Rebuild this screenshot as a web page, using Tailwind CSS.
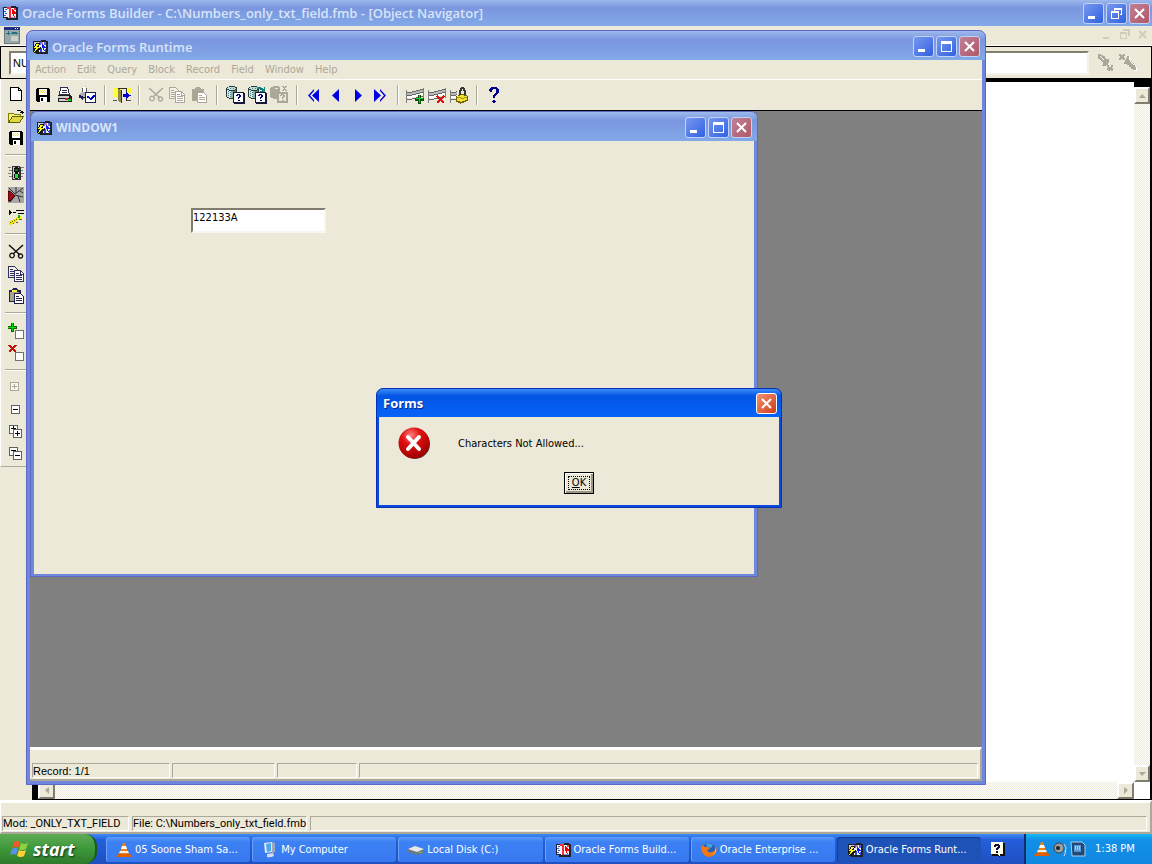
<!DOCTYPE html>
<html lang="en">
<head>
  <meta charset="utf-8">
  <title>Oracle Forms Builder</title>
  <script src="https://cdn.jsdelivr.net/npm/@tailwindcss/browser@4"></script>
</head>
<body class="h-screen overflow-hidden relative flex flex-col bg-[#ece9d8] text-black text-[11px] leading-[14px] font-['DejaVu_Sans_Condensed','DejaVu_Sans',sans-serif]">

  <!-- shared icons -->
  <svg class="hidden">
    <symbol id="builder" viewBox="0 0 16 16">
      <path d="M1 2h8V1h5v1h2v13H4v-2H1z" fill="#202028"/>
      <path d="M2 3h4v9H2z" fill="#f0f4ff"/><path d="M3 4h2v1H3zM2 6h2v1H2zM3 8h2v1H3zM2 10h2v1H2z" fill="#3858d8"/>
      <path d="M6 3h8v10H6z" fill="#fff0f0"/><path d="M5 2h4v2H5zM7 4h2v9H7zM12 3h2v2h-2z" fill="#f03040"/>
      <path d="M10 4h1v1h1v1h1v1h1v2h-2v2h1v2h-1v-2h-1v-2h-1z" fill="#f00000"/><path d="M9 12h5v1H9z" fill="#8898e8"/>
    </symbol>
    <symbol id="runtime" viewBox="0 0 16 16">
      <path d="M1 2h8V1h5v1h2v13H4v-2H1z" fill="#202028"/>
      <path d="M2 3h5v9H2z" fill="#c8d0dc"/><path d="M7 3h7v10H7z" fill="#e8f0ff"/>
      <path d="M7 3h2v3H7zM12 3h2v3h-2z" fill="#4a6cf0"/><path d="M9 3h2v2H9z" fill="#e07090"/>
      <path d="M8 9h2v4H8zM13 10h1v3h-1z" fill="#2a4ae0"/>
      <path d="M10 5h1v1h1v1h1v1h1v1h-2v2h1v1h-1v-1h-1V9h-1z" fill="#1818f0"/>
      <path d="M4 4h4v2H7v2h2v1L4 14H2v-3L1 9l2-3z" fill="#181810"/>
      <path d="M4 5h3v1H6v1H5v1h3v1H6v1H5v1H4v1H3v1H2v-1h1v-2h1V9H2V8h1V7h1z" fill="#ffff20"/>
    </symbol>
    <symbol id="save" viewBox="0 0 16 16">
      <path d="M2 1h12v1h1v13H2l-1-1V2h1z" fill="#000"/><path d="M4 2h8v6H4z" fill="#fff"/>
      <path d="M5 3h1v1H5zM7 3h1v1H7zM9 3h1v1H9zM6 4h1v1H6zM8 4h1v1H8zM10 4h1v1h-1zM5 5h1v1H5zM7 5h1v1H7zM9 5h1v1H9z" fill="#f0e050"/>
      <path d="M5 10h7v5H5z" fill="#fff"/><path d="M6 11h2v3H6z" fill="#000"/>
    </symbol>
    <symbol id="cut" viewBox="0 0 16 16">
      <path d="M15 1L5 10M1 1l11 10" fill="none" stroke="currentColor" stroke-width="1.500"/>
      <path d="M5 9.500a2 2 0 1 1-2 4 2 2 0 0 1 2-4M12 10a2 2 0 1 1 1 4 2 2 0 0 1-1-4" fill="none" stroke="currentColor" stroke-width="1.300"/>
    </symbol>
    <symbol id="copy" viewBox="0 0 16 16">
      <path d="M.500.500h6l3 3v8h-9z" fill="#f4f2e8" stroke="currentColor"/><path d="M2 3.500h3M2 5.500h4M2 7.500h4M2 9.500h4" stroke="currentColor"/>
      <path d="M6.500 4.500h6l3 3v8h-9z" fill="#fff" stroke="currentColor"/><path d="M12.500 5v3h3M8 7.500h3M8 9.500h6M8 11.500h6M8 13.500h6" stroke="currentColor" fill="none"/>
    </symbol>
    <symbol id="paste" viewBox="0 0 16 16">
      <path d="M1 2h3l1-2h4l1 2h3v12H1z" fill="currentColor"/><path d="M2 4h9v9H2z" fill="#a8a490"/>
      <path d="M6.500 5.500h6l3 3v7h-9z" fill="#fff" stroke="currentColor"/><path d="M8 8.500h3M8 10.500h6M8 12.500h6" stroke="currentColor"/>
    </symbol>
    <symbol id="cone" viewBox="0 0 16 16">
      <path d="M7 1h2l4 12H3z" fill="#f08010"/><path d="M6 4h4l1 3H5z" fill="#fff"/><path d="M4 9h8l1 2H3z" fill="#eee"/>
      <path d="M2 12h12l2 3H0z" fill="#e06000"/>
    </symbol>
    <symbol id="db" viewBox="0 0 20 18">
      <path d="M2 1h2V0h6v1h2v8H8v4H4v-1H2v-1H1V2h1z" fill="#283838"/>
      <path d="M3 1h7v1h1v1h-1v1H4V3H2V2h1z" fill="#c0dcd8"/>
      <path d="M2 4h2v1h2v7H4v-1H2z" fill="#d8e8e4"/><path d="M6 5h2v7H6z" fill="#88b0a8"/><path d="M8 5h2V4h1v3H8z" fill="#408880"/>
      <path d="M3 5h1v1H3zM3 7h1v1H3zM3 9h1v1H3zM5 6h1v1H5zM5 8h1v1H5zM5 10h1v1H5zM5 2h1v1H5zM8 2h1v1H8z" fill="#408080"/>
      <path d="M8.500 6.500h10v10h-10z" fill="#fff" stroke="#181838"/><path d="M9 17.500h10.500V7" stroke="#181838" fill="none"/>
      <path d="M11 10V9h1V8h3v1h1v2h-1v1h-1v1h-1v-2h1V9h-1v1zM13 14h2v1h-2z" fill="#000080"/>
    </symbol>
    <symbol id="rows" viewBox="0 0 18 17">
      <path d="M1 5h5V4h4V3h4V2h3v3h-3v1h-4v1H6v1H1z" fill="#b8b8b8"/>
      <path d="M1 5h5V4h4V3h4V2h3v1h-3v1h-4v1H6v1H1zM1 8h5V7h4V6h4V5h3v1h-3v1h-4v1H6v1H1zM1 12h5v-1h4v-1h4V9h3v1h-3v1h-4v1H6v1H1z" fill="#686868"/>
      <path d="M0 3h1v13H0zM17 1h1v10h-1z" fill="#808080"/>
      <path d="M1 9h5V8h4V7h4V6h3v2h-3v1h-4v1H6v1H1z" fill="#fff"/>
    </symbol>
  </svg>

  <!-- builder title bar -->
  <header class="h-[26px] shrink-0 flex items-center gap-[4px] pl-[2px] pr-[2px] bg-linear-to-b from-[#9db9ec] via-[#7a96df] via-30% to-[#82a9e8]">
    <svg class="w-4 h-4" shape-rendering="crispEdges"><use href="#builder"/></svg>
    <h1 class="flex-1 text-[13px] leading-[16px] font-semibold text-[#d8e4f8] font-['Open_Sans',sans-serif] whitespace-nowrap">Oracle Forms Builder - C:\Numbers_only_txt_field.fmb - [Object Navigator]</h1>
    <div class="flex gap-[2px]">
      <button aria-label="Minimize" class="w-[21px] h-[21px] rounded-[3px] border border-[#c4d2f4] bg-linear-to-br from-[#7898f0] to-[#3060e0]"><svg class="w-[19px] h-[19px]" shape-rendering="crispEdges"><path d="M4 12h7v3H4z" fill="#fff"/></svg></button>
      <button aria-label="Restore" class="w-[21px] h-[21px] rounded-[3px] border border-[#c4d2f4] bg-linear-to-br from-[#7898f0] to-[#3060e0]"><svg class="w-[19px] h-[19px]" shape-rendering="crispEdges"><path d="M7 4h8v7h-2v-1h1V6H8v1H7zM4 7h8v8H4zm1 2v5h6V9z" fill="#fff" fill-rule="evenodd"/></svg></button>
      <button aria-label="Close" class="w-[21px] h-[21px] rounded-[3px] border border-[#c4d2f4] bg-linear-to-br from-[#c08098] to-[#b05868]"><svg class="w-[19px] h-[19px]"><path d="M5 5l9 9M14 5l-9 9" stroke="#fff" stroke-width="2"/></svg></button>
    </div>
  </header>

  <div class="h-[20px] shrink-0 flex justify-between items-start pl-[4px] border-b border-white">
    <svg class="w-4 h-[17px] mt-[1px]" shape-rendering="crispEdges"><path d="M0 0h16v17H0z" fill="#707880"/><path d="M0 0h16v3H0z" fill="#203080"/><path d="M11 1h1v1h-1zM13 1h1v1h-1z" fill="#fff"/><path d="M1 3h14v13H1z" fill="#98a8a8"/><path d="M2 6h4M4 4v4M7 6h7M8 5h5" stroke="#207080"/><path d="M7 9h7v5H7z" fill="#c8d0c8"/></svg>
    <div class="flex gap-[3px] pt-[1px] text-[#d0cdbc]">
      <button aria-label="Minimize child" class="w-[18px] h-[16px]"><svg class="w-[18px] h-[16px]"><path d="M7 10h6v2H7z" fill="currentColor"/></svg></button>
      <button aria-label="Restore child" class="w-[18px] h-[16px]"><svg class="w-[18px] h-[16px]" shape-rendering="crispEdges"><path d="M6 2h7v7h-2V4H6zM3 5h7v7H3zm1 2v4h5V7z" fill="currentColor" fill-rule="evenodd"/></svg></button>
      <button aria-label="Close child" class="w-[14px] h-[16px]"><svg class="w-[14px] h-[16px]"><path d="M1 4l7 7M8 4l-7 7" stroke="currentColor" stroke-width="2"/></svg></button>
    </div>
  </div>

  <div class="h-[33px] shrink-0 flex items-center pl-[8px] pr-[14px] border border-black">
    <input aria-label="Object" value="NUMBERS_ONLY_TXT_FIELD" class="flex-1 h-[24px] px-[2px] bg-white border-2 border-t-[#808070] border-l-[#808070] border-b-[#f4f2e8] border-r-[#f4f2e8] font-['Liberation_Sans',sans-serif]">
    <div class="flex gap-[4px] pl-[8px] text-[#aca899]">
      <button aria-label="Find next"><svg class="w-[18px] h-[18px]" shape-rendering="crispEdges"><path d="M1 0h3v1h2v1h2v2h1v1h3v4h-1v2H9v1H5v-1h1V8H5V7H4V6H3V5H1z" fill="currentColor"/><path d="M3 2h1v1h1v1h1v1h1v1H6V5H5V4H4V3H3zM12 9h1v1h-1v2h-1v-2h1z" fill="#fff"/><path d="M10 11h2v2h2v-2h2v2h-1v1h1v3h-2v-1h-1v1h-2v-1h-1v-2h1v-1h-1z" fill="currentColor"/></svg></button>
      <button aria-label="Find previous"><svg class="w-[18px] h-[18px]" shape-rendering="crispEdges"><path d="M0 0h2v1h2V0h2v2H5v2h1v2H4V5H2v1H0V4h1V2H0z" fill="currentColor"/><path d="M8 2h2v3h1v2h2v2h2v2h1v2h1v3h-3v-1h-2v-2h-2v-2H8v-1H5V8h1V6h1V4h1z" fill="currentColor"/><path d="M10 3h1v3h-1zM11 7h1v1h1v1h1v1h1v1h-1v-1h-1V9h-1V8h-1zM17 13h1v4h-3v-1h2z" fill="#fff"/></svg></button>
    </div>
  </div>

  <!-- navigator area -->
  <main class="flex-1 min-h-0 flex">
    <div class="w-[32px] shrink-0">
      <div class="h-[388px] pt-[4px] pl-[4px] border-l border-white border-b border-b-[#aca899] flex flex-col">
        <button aria-label="New" class="h-[22px] w-[22px] grid place-items-center"><svg class="w-4 h-4" shape-rendering="crispEdges"><path d="M2.500 1.500h8l3 3v10h-11z" fill="#fff" stroke="#000"/><path d="M10.500 1.500v3h3" fill="none" stroke="#000"/></svg></button>
        <button aria-label="Open" class="h-[22px] w-[22px] grid place-items-center"><svg class="w-4 h-4" shape-rendering="crispEdges"><path d="M.500 14.500v-9h5l1 1h6v2" fill="#f8f080" stroke="#808000"/><path d="M.500 14.500l4-6h11l-4 6z" fill="#e0d840" stroke="#606000"/><path d="M9 2.500h3l2 1v2M12 4h4" fill="none" stroke="#000"/></svg></button>
        <button aria-label="Save module" class="h-[22px] w-[22px] grid place-items-center"><svg class="w-4 h-4" shape-rendering="crispEdges"><use href="#save"/></svg></button>
        <div class="h-[13px] pt-[5px]"><div class="h-[2px] w-[24px] border-t border-t-[#aca899] bg-white"></div></div>
        <button aria-label="Run" class="h-[22px] w-[22px] grid place-items-center"><svg class="w-4 h-4" shape-rendering="crispEdges"><path d="M0 2h3v1H0zM1 5h3v1H1zM0 8h3v1H0zM1 11h3v1H1zM13 2h3v1h-3zM12 5h3v1h-3zM13 8h3v1h-3zM12 11h3v1h-3z" fill="#808080"/><path d="M4 1h8v1h1v13H4z" fill="#303030"/><path d="M5 2h6v12H5z" fill="#c0ccc0"/><path d="M6 3h1V2h3v1h1v4h-1v1H7V7H6zM6 9h1V8h3v1h1v4h-1v1H7v-1H6z" fill="#101010"/><path d="M7 4h3v2H7z" fill="#206820"/><path d="M7 9h3v4H7z" fill="#10f030"/></svg></button>
        <button aria-label="Debug" class="h-[22px] w-[22px] grid place-items-center"><svg class="w-4 h-4"><path d="M0 0h16v16H0z" fill="#a8a8a8"/><path d="M1 1l6 6 8-6M7 8l8 2M7 9l-5 6M8 0v6M10 9l2 6M12 4l3 2" stroke="#303030" fill="none"/><path d="M0 4l3 1 4 4-5 5H0z" fill="#a00818" stroke="#300"/></svg></button>
        <button aria-label="Step" class="h-[22px] w-[22px] grid place-items-center"><svg class="w-4 h-4" shape-rendering="crispEdges"><path d="M1 1h1v1h1v1h1v1H3v1H2v1H1zM5 3h3v1H5zM8 1h8v1H8zM10 4h6v1h-6z" fill="#000"/><path d="M1 12h2v-1h2v-1h2V9h1V8h2V7h3v3h-2v1H9v1H8v2H6v1H4v1H1z" fill="#f0e810"/><path d="M2 13h1v1H2zM4 12h1v1H4zM6 11h1v1H6zM8 10h1v1H8zM5 14h1v1H5zM11 10h3v1h-3zM8 13h2v1H8z" fill="#686000"/><path d="M10 6h2v3h-2z" fill="#10b020"/></svg></button>
        <div class="h-[13px] pt-[5px]"><div class="h-[2px] w-[24px] border-t border-t-[#aca899] bg-white"></div></div>
        <button aria-label="Cut" class="h-[22px] w-[22px] grid place-items-center"><svg class="w-4 h-4 text-[#101010]"><use href="#cut"/></svg></button>
        <button aria-label="Copy" class="h-[22px] w-[22px] grid place-items-center"><svg class="w-4 h-4 text-[#303060]" shape-rendering="crispEdges"><use href="#copy"/></svg></button>
        <button aria-label="Paste" class="h-[22px] w-[22px] grid place-items-center"><svg class="w-4 h-4 text-[#202050]" shape-rendering="crispEdges"><use href="#paste"/><path d="M4 2h5v2H4z" fill="#f8f040"/></svg></button>
        <div class="h-[13px] pt-[5px]"><div class="h-[2px] w-[24px] border-t border-t-[#aca899] bg-white"></div></div>
        <button aria-label="Create" class="h-[22px] w-[22px] grid place-items-center"><svg class="w-4 h-4" shape-rendering="crispEdges"><path d="M3 0h3v3h3v3H6v3H3V6H0V3h3z" fill="#106010"/><path d="M4 0h1v8H4zM0 4h8v1H0z" fill="#10e010"/><path d="M7.500 7.500h8v8h-8z" fill="#fff" stroke="#707070"/></svg></button>
        <button aria-label="Delete" class="h-[22px] w-[22px] grid place-items-center"><svg class="w-4 h-4" shape-rendering="crispEdges"><path d="M1 0l7 7M8 0L1 7" stroke="#c01010" stroke-width="2"/><path d="M7.500 7.500h8v8h-8z" fill="#fff" stroke="#707070"/></svg></button>
        <div class="h-[13px] pt-[5px]"><div class="h-[2px] w-[24px] border-t border-t-[#aca899] bg-white"></div></div>
        <button aria-label="Expand" class="h-[22px] w-[22px] grid place-items-center"><svg class="w-4 h-4" shape-rendering="crispEdges"><path d="M2.500 2.500h8v8h-8z" fill="#f8f6ee" stroke="#aca899"/><path d="M4 6.500h5M6.500 4v5" stroke="#aca899"/></svg></button>
        <button aria-label="Collapse" class="h-[22px] w-[22px] grid place-items-center"><svg class="w-4 h-4" shape-rendering="crispEdges"><path d="M3.500 3.500h8v8h-8z" fill="#fff" stroke="#606060"/><path d="M5 7.500h5" stroke="#000"/></svg></button>
        <button aria-label="Expand all" class="h-[22px] w-[22px] grid place-items-center"><svg class="w-4 h-4" shape-rendering="crispEdges"><path d="M1.500 1.500h8v8h-8z" fill="#fff" stroke="#606060"/><path d="M3 4.500h5M5.500 2v4" stroke="#000"/><path d="M5.500 5.500h8v8h-8z" fill="#fff" stroke="#606060"/><path d="M7 9.500h5M9.500 7v5" stroke="#000"/></svg></button>
        <button aria-label="Collapse all" class="h-[22px] w-[22px] grid place-items-center"><svg class="w-4 h-4" shape-rendering="crispEdges"><path d="M1.500 1.500h8v8h-8z" fill="#fff" stroke="#606060"/><path d="M3 4.500h5" stroke="#000"/><path d="M5.500 5.500h8v8h-8z" fill="#fff" stroke="#606060"/><path d="M7 9.500h5" stroke="#000"/></svg></button>
      </div>
    </div>
    <div class="flex-1 min-w-0 flex flex-col bg-white border-t-[3px] border-l-[6px] border-r-2 border-b border-black">
      <div class="flex-1 min-h-0 flex">
        <div class="flex-1"></div>
        <div class="w-[16px] flex flex-col border-t-[5px] border-black bg-[repeating-conic-gradient(#ffffff_0_25%,#ece9d8_0_50%)] bg-[length:2px_2px]">
          <button aria-label="Scroll up" class="h-[17px] bg-[#ece9d8] border-2 border-t-white border-l-white border-b-[#807d70] border-r-[#807d70] grid place-items-center"><svg class="w-[7px] h-[4px]"><path d="M0 4h7L3 0z" fill="#aca899"/></svg></button>
          <div class="flex-1"></div>
          <button aria-label="Scroll down" class="h-[17px] bg-[#ece9d8] border-2 border-t-white border-l-white border-b-[#807d70] border-r-[#807d70] grid place-items-center"><svg class="w-[7px] h-[4px]"><path d="M0 0h7L3 4z" fill="#aca899"/></svg></button>
        </div>
      </div>
      <div class="h-[17px] flex pr-[16px]">
        <div class="flex-1 flex bg-[repeating-conic-gradient(#ffffff_0_25%,#ece9d8_0_50%)] bg-[length:2px_2px]">
          <button aria-label="Scroll left" class="w-[17px] bg-[#ece9d8] border-2 border-t-white border-l-white border-b-[#807d70] border-r-[#807d70] grid place-items-center"><svg class="w-[4px] h-[7px]"><path d="M4 0v7L0 3z" fill="#aca899"/></svg></button>
          <div class="flex-1"></div>
          <button aria-label="Scroll right" class="w-[17px] bg-[#ece9d8] border-2 border-t-white border-l-white border-b-[#807d70] border-r-[#807d70] grid place-items-center"><svg class="w-[4px] h-[7px]"><path d="M0 0v7l4-4z" fill="#aca899"/></svg></button>
        </div>
      </div>
    </div>
  </main>

  <footer class="h-[34px] shrink-0 flex items-end gap-[3px] pl-[1px] pr-[3px] pb-[1px] border-t-[3px] border-l border-white border-b-2 border-b-[#aca899] border-r-2 border-r-[#aca899] leading-[14px] font-['Roboto',sans-serif] whitespace-nowrap">
    <span class="h-[15px] min-w-[127px] border border-t-[#aca899] border-l-[#aca899] border-b-white border-r-white">Mod: _ONLY_TXT_FIELD</span>
    <span class="h-[15px] min-w-[168px] border border-t-[#aca899] border-l-[#aca899] border-b-white border-r-white">File: C:\Numbers_only_txt_field.fmb</span>
    <span class="h-[15px] flex-1 border border-t-[#aca899] border-l-[#aca899] border-b-white border-r-white"></span>
  </footer>

  <!-- taskbar -->
  <nav class="h-[30px] shrink-0 flex text-white bg-linear-to-b from-[#3f8cf3] via-[#245edb] via-20% to-[#1f50c0]">
    <button class="w-[97px] flex items-center gap-[4px] pl-[10px] rounded-r-[12px] bg-linear-to-b from-[#5eac56] via-[#3c9838] to-[#2f7a2c] border-r-2 border-[#1d5a1d] text-[18px] leading-[20px] font-bold italic font-['Open_Sans',sans-serif] [text-shadow:1px_1px_2px_#103010]">
      <svg class="w-[19px] h-[18px]"><path d="M4 2q3-2 6 0L8 8Q5 6 2 8z" fill="#f05a28"/><path d="M11 3q3 2 7 0l-2 6q-4 2-7 0z" fill="#8fd040"/><path d="M2 9q3-2 6 0l-2 6q-3-2-6 0z" fill="#5a90f0"/><path d="M9 10q3 2 7 0l-2 6q-3 2-7 0z" fill="#ffd030"/></svg>
      start
    </button>
    <div class="flex-1 min-w-0 flex gap-[2px] pt-[3px] pb-[2px] pl-[9px] pr-[43px]">
      <button class="flex-1 min-w-0 flex items-center gap-[3px] pl-[9px] rounded-[3px] bg-linear-to-b from-[#5a9af8] via-[#3c81f3] via-20% to-[#3878f0] border-l border-[#6aa4fa] whitespace-nowrap"><svg class="w-4 h-4"><use href="#cone"/></svg>05 Soone Sham Sa...</button>
      <button class="flex-1 min-w-0 flex items-center gap-[3px] pl-[9px] rounded-[3px] bg-linear-to-b from-[#5a9af8] via-[#3c81f3] via-20% to-[#3878f0] border-l border-[#6aa4fa] whitespace-nowrap"><svg class="w-4 h-4"><path d="M2 1l8-1v10l-7 1z" fill="#e0e8f8"/><path d="M4 2l5-1v8l-4 1z" fill="#48a8f0"/><path d="M10 0l3 1v9l-3 1z" fill="#a0a8c0"/><path d="M5 12l6-1 1 3q-4 2-7 1z" fill="#d8dce8"/></svg>My Computer</button>
      <button class="flex-1 min-w-0 flex items-center gap-[3px] pl-[9px] rounded-[3px] bg-linear-to-b from-[#5a9af8] via-[#3c81f3] via-20% to-[#3878f0] border-l border-[#6aa4fa] whitespace-nowrap"><svg class="w-4 h-4"><path d="M0 7l7-3 9 3v4l-7 2-9-3z" fill="#707880"/><path d="M0 7l7-3 9 3-7 3z" fill="#e8e8e8"/><path d="M11 10h3v1h-3z" fill="#40e040"/></svg>Local Disk (C:)</button>
      <button class="flex-1 min-w-0 flex items-center gap-[3px] pl-[9px] rounded-[3px] bg-linear-to-b from-[#5a9af8] via-[#3c81f3] via-20% to-[#3878f0] border-l border-[#6aa4fa] whitespace-nowrap"><svg class="w-4 h-4" shape-rendering="crispEdges"><use href="#builder"/></svg>Oracle Forms Build...</button>
      <button class="flex-1 min-w-0 flex items-center gap-[3px] pl-[9px] rounded-[3px] bg-linear-to-b from-[#5a9af8] via-[#3c81f3] via-20% to-[#3878f0] border-l border-[#6aa4fa] whitespace-nowrap"><svg class="w-4 h-4"><circle cx="8" cy="8" r="7" fill="#2060b8"/><path d="M5 2q4-2 7 1l-2 3-4-1z" fill="#48a0e0"/><path d="M1 3q-2 6 2 10 5 4 10 0 4-4 2-9 0 5-4 6-4 1-5-2l3-1-2-2-3 0z" fill="#f07818"/><path d="M13 4q3 5-1 9 3-1 3-5z" fill="#ffd040"/></svg>Oracle Enterprise ...</button>
      <button class="flex-1 min-w-0 flex items-center gap-[3px] pl-[9px] rounded-[3px] bg-[#1e52b7] border-l border-t border-[#163e90] whitespace-nowrap"><svg class="w-4 h-4" shape-rendering="crispEdges"><use href="#runtime"/></svg>Oracle Forms Runt...</button>
    </div>
    <div class="w-[128px] flex items-center gap-[2px] pl-[8px] bg-linear-to-b from-[#19b9f3] via-[#1290e8] via-20% to-[#1088e0] border-l-2 border-[#102e68]">
      <svg class="w-4 h-4"><use href="#cone"/></svg>
      <svg class="w-4 h-4"><circle cx="7" cy="7" r="5" fill="#98a0a8" stroke="#404040"/><circle cx="6" cy="7" r="2" fill="#202020"/><path d="M12 3l2 4-1 4M12 15l2-5" stroke="#d0d8f8" fill="none"/></svg>
      <svg class="w-4 h-4"><path d="M1 1h11l3 3v11H2z" fill="#204878" stroke="#a8d0f0"/><path d="M4 4h7v7H4z" fill="#5898d0"/><path d="M5 6h5M5 8h5" stroke="#fff" stroke-dasharray="1 1"/></svg>
      <span class="pl-[7px] whitespace-nowrap">1:38 PM</span>
    </div>
  </nav>
  <svg class="absolute right-[147px] bottom-[7px] w-[14px] h-[15px]" shape-rendering="crispEdges"><path d="M1 1h13v13H9v1H8v-1H1z" fill="#101010"/><path d="M0 0h12v12H9v2H8v-1H7v-1H0z" fill="#ffffe8"/><path d="M3 4V3h1V2h4v1h1v3H8v1H7v1H5V6h1V5h1V4H5v1H3zM5 9h2v2H5z" fill="#101040"/></svg>

  <!-- Forms Runtime window -->
  <section class="absolute left-[26px] top-[30px] w-[960px] h-[755px] flex flex-col rounded-t-[7px] overflow-hidden bg-[#7085dc] border border-[#5c68c4] px-[3px] pb-[3px]">
    <div class="h-[29px] shrink-0 -mx-[3px] flex items-center gap-[4px] pl-[5px] pr-[5px] pt-[2px] bg-linear-to-b from-[#9db9ec] via-[#7a96df] via-30% to-[#82a9e8]">
      <svg class="w-4 h-4" shape-rendering="crispEdges"><use href="#runtime"/></svg>
      <h2 class="flex-1 text-[13px] leading-[16px] font-semibold text-[#d8e4f8] font-['Open_Sans',sans-serif]">Oracle Forms Runtime</h2>
      <div class="flex gap-[2px]">
        <button aria-label="Minimize" class="w-[21px] h-[21px] rounded-[3px] border border-[#c4d2f4] bg-linear-to-br from-[#7898f0] to-[#3060e0]"><svg class="w-[19px] h-[19px]" shape-rendering="crispEdges"><path d="M4 12h7v3H4z" fill="#fff"/></svg></button>
        <button aria-label="Maximize" class="w-[21px] h-[21px] rounded-[3px] border border-[#c4d2f4] bg-linear-to-br from-[#7898f0] to-[#3060e0]"><svg class="w-[19px] h-[19px]" shape-rendering="crispEdges"><path d="M4 4h11v11H4zm1 3v7h9V7z" fill="#fff" fill-rule="evenodd"/></svg></button>
        <button aria-label="Close" class="w-[21px] h-[21px] rounded-[3px] border border-[#c4d2f4] bg-linear-to-br from-[#c08098] to-[#b05868]"><svg class="w-[19px] h-[19px]"><path d="M5 5l9 9M14 5l-9 9" stroke="#fff" stroke-width="2"/></svg></button>
      </div>
    </div>
    <div class="h-[20px] shrink-0 flex items-center gap-[11px] pl-[5px] bg-[#ece9d8] border-b border-white text-[#aca899]">
      <button>Action</button>
      <button>Edit</button>
      <button>Query</button>
      <button>Block</button>
      <button>Record</button>
      <button>Field</button>
      <button>Window</button>
      <button>Help</button>
    </div>
    <div class="h-[31px] shrink-0 flex items-center pl-[2px] bg-[#ece9d8] border-b border-black text-[#aca899]">
      <button aria-label="Save" class="w-[22px] h-[22px] grid place-items-center"><svg class="w-4 h-4" shape-rendering="crispEdges"><use href="#save"/></svg></button>
      <button aria-label="Print" class="w-[22px] h-[22px] grid place-items-center"><svg class="w-4 h-4" shape-rendering="crispEdges"><path d="M3.500.500h7l2 7h-10z" fill="#fff" stroke="#303050"/><path d="M5 3h5M5 5h5" stroke="#303050"/><path d="M1 8h12l2 2v5H1z" fill="#202020"/><path d="M1 9h11v2H1zM2 12h11v2H2z" fill="#d0d0d0"/><path d="M8 11h3v2H8z" fill="#e02020"/><path d="M11 12h3v2h-3z" fill="#20d020"/></svg></button>
      <button aria-label="Print setup" class="w-[22px] h-[22px] grid place-items-center"><svg class="w-[19px] h-[18px]" shape-rendering="crispEdges"><path d="M5 1h2V0h1v2h1v4h4v3H9v5H7v-1H5v-1H3v-1H1V8h1V7h2V5h1z" fill="#b0b0b0"/><path d="M5 1h3v5H5z" fill="#fff"/><path d="M8 2h1v4H8zM4 2h1v4H4z" fill="#606060"/><path d="M1 9h2v1h2v1h3v1H5v2H4v-1H3v-1H1z" fill="#202050"/><path d="M7.500 6.500h10v10h-10z" fill="#fff" stroke="#182050"/><path d="M9 10h2v1h1v1h1v-1h1v-1h1V9h2v2h-1v1h-1v1h-1v1h-2v-1h-1v-1H9z" fill="#0000c0"/></svg></button>
      <div class="w-[13px] h-[20px] pl-[6px]"><div class="w-[2px] h-[20px] border-l border-[#aca899] bg-white"></div></div>
      <button aria-label="Exit" class="w-[22px] h-[22px] grid place-items-center"><svg class="w-[18px] h-[17px]" shape-rendering="crispEdges"><path d="M0 1h18v5H0zM1 6h13v4H1z" fill="#ffff30"/><path d="M0 13h4v1H0zM13 13h5v1h-5z" fill="#505050"/><path d="M5 1h9v13h-1V2H5z" fill="#303020"/><path d="M5 2h2v1h2v13H8v-1H6v-1H5z" fill="#908848"/><path d="M8 3h1v13H8z" fill="#303020"/><path d="M9 2h4v11H9z" fill="#e8e8e0"/><path d="M10 7h3V5h1v1h1v1h1v1h2v1h-2v1h-1v1h-1v1h-1v-2h-3z" fill="#0000c8"/></svg></button>
      <div class="w-[13px] h-[20px] pl-[5px]"><div class="w-[2px] h-[20px] border-l border-[#aca899] bg-white"></div></div>
      <button aria-label="Cut" class="w-[20px] h-[22px] grid place-items-center"><svg class="w-4 h-4"><use href="#cut"/></svg></button>
      <button aria-label="Copy" class="w-[22px] h-[22px] grid place-items-center"><svg class="w-4 h-4" shape-rendering="crispEdges"><use href="#copy"/></svg></button>
      <button aria-label="Paste" class="w-[22px] h-[22px] grid place-items-center"><svg class="w-4 h-4" shape-rendering="crispEdges"><use href="#paste"/></svg></button>
      <div class="w-[14px] h-[20px] pl-[6px]"><div class="w-[2px] h-[20px] border-l border-[#aca899] bg-white"></div></div>
      <button aria-label="Enter query" class="w-[22px] h-[22px] grid place-items-center"><svg class="w-[20px] h-[18px]" shape-rendering="crispEdges"><use href="#db"/></svg></button>
      <button aria-label="Execute query" class="w-[22px] h-[22px] grid place-items-center"><svg class="w-[20px] h-[18px]" shape-rendering="crispEdges"><use href="#db"/><path d="M10 1h4v1h2v1h1V1h1v5h-5V5h2V4h-2V3h-3z" fill="#108078"/></svg></button>
      <button aria-label="Cancel query" class="w-[22px] h-[22px] grid place-items-center"><svg class="w-[20px] h-[18px]" shape-rendering="crispEdges"><path d="M2 1h2V0h6v1h1v5H8v7H4v-1H2v-1H1V2h1z" fill="currentColor"/><path d="M6 2h3v1H6z" fill="#ece9d8"/><path d="M13 0h2v1h1V0h2v1h-1v1h-1v1h1v1h1v1h-2V4h-1v1h-2V4h1V3h1V2h-1V1h-1z" fill="currentColor"/><path d="M9 7h9v9H9z" fill="#ece9d8" stroke="currentColor" stroke-width="2"/><path d="M11 10V9h1V8h3v1h1v2h-1v1h-1v1h-1v-2h1V9h-1v1zM13 14h2v1h-2z" fill="currentColor"/></svg></button>
      <div class="w-[13px] h-[20px] pl-[6px]"><div class="w-[2px] h-[20px] border-l border-[#aca899] bg-white"></div></div>
      <button aria-label="Previous block" class="w-[22px] h-[22px] grid place-items-center"><svg class="w-[12px] h-[13px]"><path d="M6 0v2L2 6.500 6 11v2L0 6.500zM11 0v13L4 6.500z" fill="#0000e0"/></svg></button>
      <button aria-label="Previous record" class="w-[22px] h-[22px] grid place-items-center"><svg class="w-[8px] h-[13px]"><path d="M7 0v13L0 6.500z" fill="#0000e0"/></svg></button>
      <button aria-label="Next record" class="w-[22px] h-[22px] grid place-items-center"><svg class="w-[7px] h-[13px]"><path d="M0 0v13l7-6.500z" fill="#0000e0"/></svg></button>
      <button aria-label="Next block" class="w-[22px] h-[22px] grid place-items-center"><svg class="w-[12px] h-[13px]"><path d="M6 0v2l4 4.500L6 11v2l6-6.500zM0 0v13l7-6.500z" fill="#0000e0"/></svg></button>
      <div class="w-[13px] h-[20px] pl-[6px]"><div class="w-[2px] h-[20px] border-l border-[#aca899] bg-white"></div></div>
      <button aria-label="Insert record" class="w-[22px] h-[22px] grid place-items-center"><svg class="w-[18px] h-[17px]" shape-rendering="crispEdges"><use href="#rows"/><path d="M12 8h3v3h3v3h-3v3h-3v-3H9v-3h3z" fill="#085008"/><path d="M13 8h1v8h-1zM10 11h7v1h-7z" fill="#10d030"/></svg></button>
      <button aria-label="Remove record" class="w-[22px] h-[22px] grid place-items-center"><svg class="w-[18px] h-[17px]" shape-rendering="crispEdges"><use href="#rows"/><path d="M9 9l7 7M16 9l-7 7" stroke="#e01010" stroke-width="2"/></svg></button>
      <button aria-label="Lock record" class="w-[22px] h-[22px] grid place-items-center"><svg class="w-[18px] h-[17px]" shape-rendering="crispEdges"><use href="#rows"/><path d="M7 1h11v12H7z" fill="#ece9d8"/><path d="M9 8V3h1V1h1V0h3v1h1v2h1v5h-2V4h-1V2h-1v2h-1v4z" fill="#383838"/><path d="M6 9h2V8h3V7h3v1h3v1h1v5h-2v1h-2v1h-3v1h-1v-1H8v-1H6z" fill="#706000"/><path d="M7 9h3V8h4v1h3v4h-2v1h-3v1h-2v-1H7z" fill="#f0e030"/><path d="M7 11h4v1h3v-1h3v-1h-3v1h-3v-1H7z" fill="#a89810"/></svg></button>
      <div class="w-[13px] h-[20px] pl-[6px]"><div class="w-[2px] h-[20px] border-l border-[#aca899] bg-white"></div></div>
      <button aria-label="Help" class="w-[22px] h-[22px] grid place-items-center"><svg class="w-[10px] h-[16px]" shape-rendering="crispEdges"><path d="M0 2h1V1h1V0h6v1h1v1h1v4H9v1H8v1H7v1H6v2H4V8h1V7h1V6h1V2H4v1H3v2H1V4H0zM4 13h2v1h1v1H6v1H4v-1H3v-1h1z" fill="#000090"/></svg></button>
    </div>

    <div class="flex-1 min-h-0 bg-[#808080]"></div>

    <div class="h-[34px] shrink-0 flex items-end gap-[2px] pl-[2px] pr-[2px] pb-[1px] bg-[#ece9d8] border-t-[3px] border-t-white border-b-2 border-b-[#aca899] border-r-2 border-r-[#aca899] leading-[15px] font-['Liberation_Sans',sans-serif]">
      <span class="h-[15px] w-[138px] border border-t-[#aca899] border-l-[#aca899] border-b-white border-r-white">Record: 1/1</span>
      <span class="h-[15px] w-[103px] border border-t-[#aca899] border-l-[#aca899] border-b-white border-r-white"></span>
      <span class="h-[15px] w-[80px] border border-t-[#aca899] border-l-[#aca899] border-b-white border-r-white"></span>
      <span class="h-[15px] flex-1 border border-t-[#aca899] border-l-[#aca899] border-b-white border-r-white"></span>
    </div>
  </section>

  <!-- WINDOW1 -->
  <section class="absolute left-[30px] top-[111px] w-[728px] h-[466px] flex flex-col rounded-t-[7px] overflow-hidden bg-[#7088dc] border border-[#5c68c4] px-[3px] pb-[2px]">
    <div class="h-[29px] shrink-0 -mx-[3px] flex items-center gap-[4px] pl-[5px] pr-[5px] pt-[2px] bg-linear-to-b from-[#9db9ec] via-[#7a96df] via-30% to-[#82a9e8]">
      <svg class="w-4 h-4" shape-rendering="crispEdges"><use href="#runtime"/></svg>
      <h2 class="flex-1 text-[12px] leading-[16px] font-bold text-[#d8e4f8] font-['Open_Sans',sans-serif]">WINDOW1</h2>
      <div class="flex gap-[2px]">
        <button aria-label="Minimize" class="w-[21px] h-[21px] rounded-[3px] border border-[#c4d2f4] bg-linear-to-br from-[#7898f0] to-[#3060e0]"><svg class="w-[19px] h-[19px]" shape-rendering="crispEdges"><path d="M4 12h7v3H4z" fill="#fff"/></svg></button>
        <button aria-label="Maximize" class="w-[21px] h-[21px] rounded-[3px] border border-[#c4d2f4] bg-linear-to-br from-[#7898f0] to-[#3060e0]"><svg class="w-[19px] h-[19px]" shape-rendering="crispEdges"><path d="M4 4h11v11H4zm1 3v7h9V7z" fill="#fff" fill-rule="evenodd"/></svg></button>
        <button aria-label="Close" class="w-[21px] h-[21px] rounded-[3px] border border-[#c4d2f4] bg-linear-to-br from-[#c08098] to-[#b05868]"><svg class="w-[19px] h-[19px]"><path d="M5 5l9 9M14 5l-9 9" stroke="#fff" stroke-width="2"/></svg></button>
      </div>
    </div>
    <div class="flex-1 bg-[#ece9d8] pt-[67px] pl-[157px]">
      <input aria-label="Number" value="122133A" class="block w-[135px] h-[25px] pb-[6px] bg-white border-2 border-t-[#807d70] border-l-[#807d70] border-b-[#f8f6ee] border-r-[#f8f6ee]">
    </div>
  </section>

  <!-- alert -->
  <section role="alertdialog" aria-label="Forms" class="absolute left-[376px] top-[388px] w-[406px] h-[120px] flex flex-col rounded-t-[7px] overflow-hidden bg-[#0a4ae0] border border-[#0831b0] px-[2px] pb-[2px]">
    <div class="h-[28px] shrink-0 -mx-[2px] flex items-center justify-between pl-[6px] pr-[4px] bg-linear-to-b from-[#3a8cf8] via-[#0354e4] via-25% to-[#0464f8]">
      <h2 class="text-[13px] leading-[16px] font-bold text-white font-['Open_Sans',sans-serif] [text-shadow:1px_1px_0_#0a2a80]">Forms</h2>
      <button aria-label="Close alert" class="w-[21px] h-[21px] rounded-[3px] border border-white bg-linear-to-br from-[#f09070] to-[#d03808]"><svg class="w-[19px] h-[19px]"><path d="M5 5l9 9M14 5l-9 9" stroke="#fff" stroke-width="2"/></svg></button>
    </div>
    <div class="flex-1 bg-[#ece9d8] pt-[10px]">
      <div class="flex items-center gap-[28px] pl-[19px]">
        <svg class="w-[32px] h-[33px]"><defs><radialGradient id="red" cx="40%" cy="25%" r="75%"><stop offset="0" stop-color="#ff8080"/><stop offset=".4" stop-color="#e01010"/><stop offset="1" stop-color="#a00000"/></radialGradient></defs><circle cx="17" cy="17" r="15" fill="#404040"/><circle cx="16" cy="16" r="15.500" fill="url(#red)"/><path d="M10 10l11 12M21 10L10 22" stroke="#fff" stroke-width="4" stroke-linecap="round"/></svg>
        <p>Characters Not Allowed...</p>
      </div>
      <button class="block mx-auto mt-[12px] w-[30px] h-[22px] p-[1px] border border-black bg-[#ece9d8] shadow-[inset_1px_1px_0_#fff,inset_-2px_-2px_0_#9a9788]"><span class="block w-[22px] h-[14px] mx-auto border border-dotted border-black leading-[12px] text-[11px]"><u>O</u>K</span></button>
    </div>
  </section>

</body>
</html>
